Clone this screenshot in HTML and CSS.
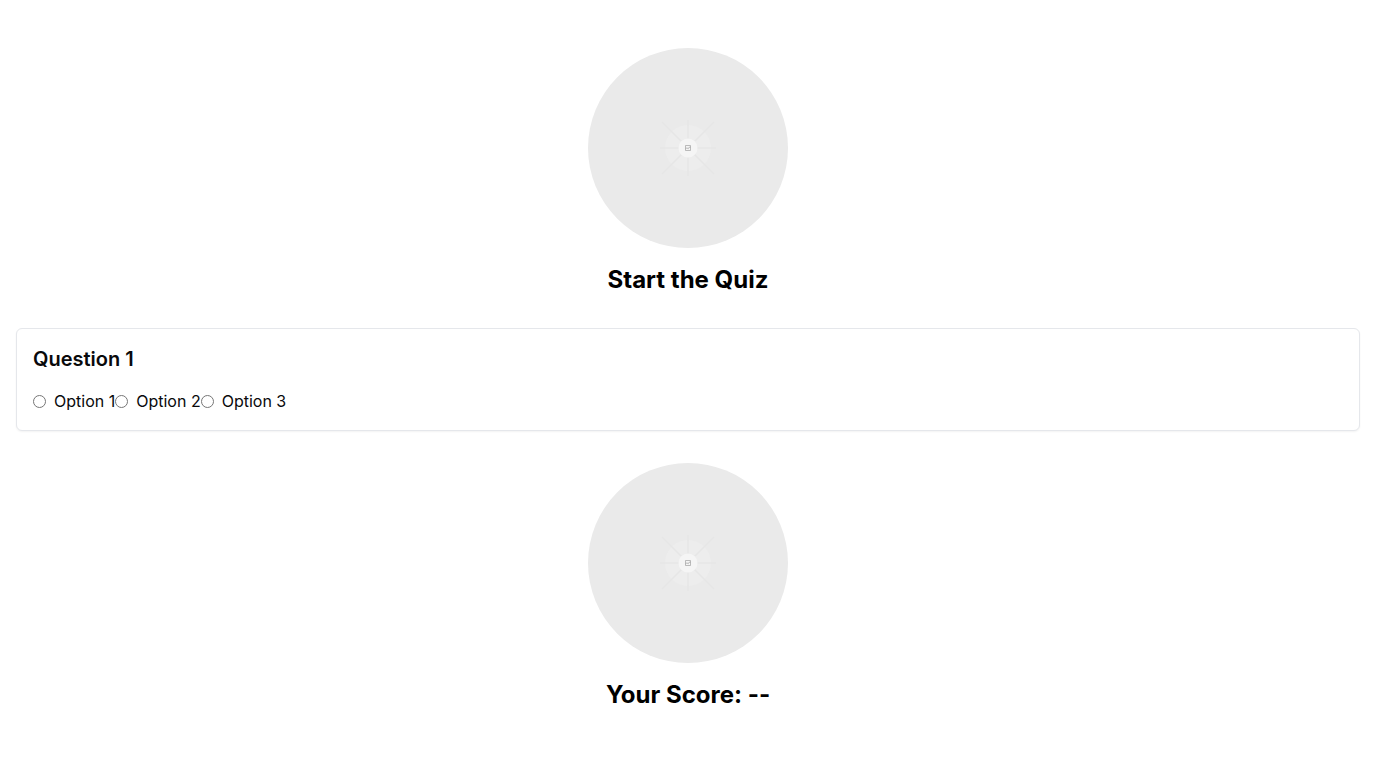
FILE: index.html
```html
<!DOCTYPE html>
<html lang="en">
<head>
<meta charset="utf-8">
<meta name="viewport" content="width=device-width, initial-scale=1">
<title>Quiz</title>
<link rel="stylesheet" href="styles.css">
</head>
<body>
<svg class="defs" aria-hidden="true">
  <symbol id="placeholder" viewBox="0 0 200 200">
    <rect width="200" height="200" fill="#eaeaea"/>
    <circle cx="100" cy="100" r="23" fill="#ededed"/>
    <path d="M100 72V128M72 100H128" fill="none" stroke="#e6e6e6" stroke-width="1.6"/>
    <path d="M74 74L126 126M126 74L74 126" fill="none" stroke="#e6e6e6" stroke-width="1.4"/>
    <circle cx="100" cy="100" r="9.5" fill="#f5f5f5"/>
    <g fill="none" stroke="#a0a0a0" stroke-width=".7">
      <path d="M97.5 97.5H102.5V102.5H97.5Z"/>
      <path d="M97.5 100.8L99 99.8L100.2 100.8L101.2 99.2H102.5"/>
    </g>
  </symbol>
</svg>
<main class="page">
  <section class="hero">
    <svg class="avatar" role="img" aria-label="Quiz"><use href="#placeholder"/></svg>
    <h1 class="heading">Start the Quiz</h1>
  </section>
  <form class="card">
    <h2 class="question">Question 1</h2>
    <div class="options">
      <label class="option"><input class="radio" type="radio" name="q1" value="1"><span>Option 1</span></label>
      <label class="option"><input class="radio" type="radio" name="q1" value="2"><span>Option 2</span></label>
      <label class="option"><input class="radio" type="radio" name="q1" value="3"><span>Option 3</span></label>
    </div>
  </form>
  <section class="hero">
    <svg class="avatar" role="img" aria-label="Score"><use href="#placeholder"/></svg>
    <h2 class="heading">Your Score: --</h2>
  </section>
</main>
</body>
</html>
```
FILE: styles.css
```css
* {
  box-sizing: border-box;
}

body {
  margin: 0;
  background: #fff;
  color: #000;
  font: 16px/24px Inter, "Liberation Sans", sans-serif;
}

.defs {
  display: none;
}

.page {
  display: flex;
  flex-direction: column;
  gap: 32px;
  padding: 48px 16px;
}

.hero {
  display: flex;
  flex-direction: column;
  align-items: center;
  gap: 16px;
}

.avatar {
  width: 200px;
  height: 200px;
  border-radius: 50%;
}

.heading {
  margin: 0;
  font-size: 24px;
  line-height: 32px;
  font-weight: 700;
}

.card {
  padding: 16px 16px 17px;
  border: 1px solid #e5e7eb;
  border-radius: 6px;
  background: #fff;
  color: #09090b;
  box-shadow: 0 1px 2px rgba(0, 0, 0, 0.05);
}

.question {
  margin: 0 0 16px;
  font-size: 20px;
  line-height: 28px;
  font-weight: 600;
}

.options {
  display: flex;
  flex-wrap: wrap;
}

.option {
  display: flex;
  align-items: center;
  gap: 8px;
}

.radio {
  width: 13px;
  height: 13px;
  margin: 0;
}
```
